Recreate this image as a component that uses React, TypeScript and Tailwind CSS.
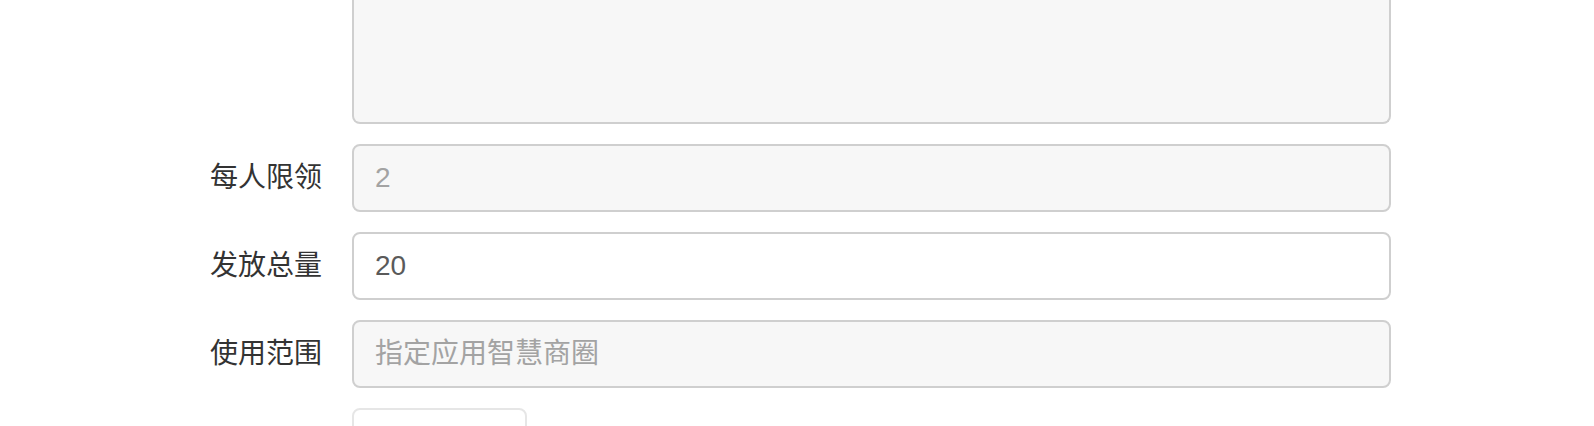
import React from 'react';

const font = { fontFamily: '"Liberation Sans", "Noto Sans CJK SC", sans-serif' };

interface FieldProps {
  label: string;
  value?: string;
  placeholder?: string;
  disabled?: boolean;
}

function Field({ label, value, placeholder, disabled }: FieldProps) {
  return (
    <div className="flex items-center">
      <label className="w-[352px] shrink-0 pr-[30px] text-right text-[28px] text-[#333]">{label}</label>
      <input
        className={`h-[68px] w-[1039px] rounded-[8px] border-2 border-[#cfcfcf] px-[21px] text-[28px] outline-none placeholder:text-[#a3a3a3] ${
          disabled ? 'bg-[#f7f7f7] text-[#a3a3a3]' : 'bg-white text-[#5a5a5a]'
        }`}
        defaultValue={value}
        placeholder={placeholder}
        disabled={disabled}
        style={font}
      />
    </div>
  );
}

export default function App() {
  return (
    <div className="min-h-[426px] overflow-hidden bg-white" style={font}>
      <div className="flex flex-col gap-[20px]">
        <div className="flex">
          <div className="w-[352px] shrink-0" />
          <textarea
            disabled
            className="h-[124px] w-[1039px] resize-none rounded-b-[8px] border-2 border-t-0 border-[#cfcfcf] bg-[#f7f7f7]"
          />
        </div>
        <Field label="每人限领" value="2" disabled />
        <Field label="发放总量" value="20" />
        <Field label="使用范围" placeholder="指定应用智慧商圈" disabled />
        <div className="flex">
          <div className="w-[352px] shrink-0" />
          <button className="h-[68px] w-[175px] rounded-[8px] border-2 border-[#e6e6e6] bg-white" />
        </div>
      </div>
    </div>
  );
}
